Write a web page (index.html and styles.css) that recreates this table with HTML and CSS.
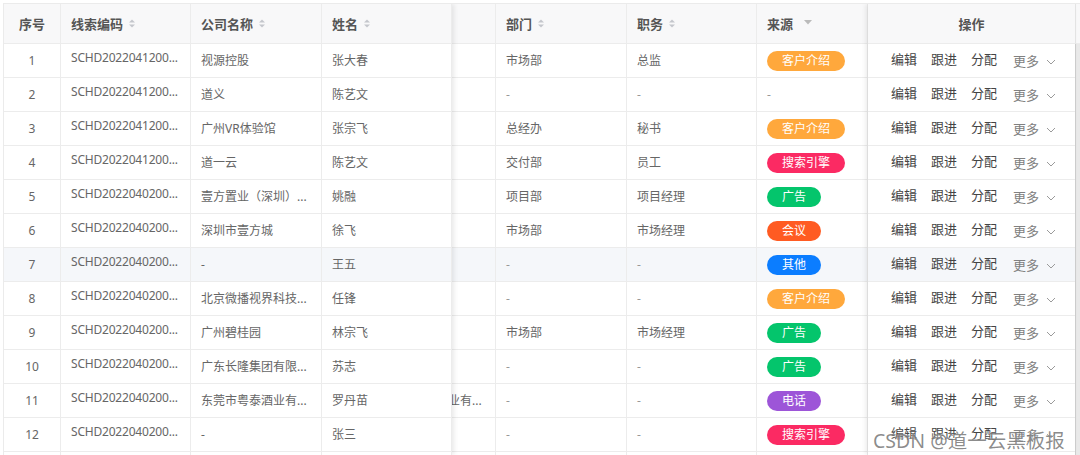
FILE: index.html
```html
<!DOCTYPE html>
<html lang="zh-CN">
<head>
<meta charset="utf-8">
<title>线索列表</title>
<link rel="stylesheet" href="styles.css">
</head>
<body>
<div class="page">
  <div class="table">
    <!-- fixed left columns -->
    <div class="pane pane-left">
      <div class="row head">
        <div class="cell c-idx center">序号</div>
        <div class="cell c-code">线索编码<svg class="sort" width="6" height="9" viewBox="0 0 6 9"><polygon points="0,3.5 3,0.5 6,3.5"/><polygon points="0,5.5 3,8.5 6,5.5"/></svg></div>
        <div class="cell c-company">公司名称<svg class="sort" width="6" height="9" viewBox="0 0 6 9"><polygon points="0,3.5 3,0.5 6,3.5"/><polygon points="0,5.5 3,8.5 6,5.5"/></svg></div>
        <div class="cell c-name">姓名<svg class="sort" width="6" height="9" viewBox="0 0 6 9"><polygon points="0,3.5 3,0.5 6,3.5"/><polygon points="0,5.5 3,8.5 6,5.5"/></svg></div>
      </div>
      <div class="row"><div class="cell c-idx center">1</div><div class="cell c-code"><span class="code">SCHD2022041200...</span></div><div class="cell c-company">视源控股</div><div class="cell c-name">张大春</div></div>
      <div class="row"><div class="cell c-idx center">2</div><div class="cell c-code"><span class="code">SCHD2022041200...</span></div><div class="cell c-company">道义</div><div class="cell c-name">陈艺文</div></div>
      <div class="row"><div class="cell c-idx center">3</div><div class="cell c-code"><span class="code">SCHD2022041200...</span></div><div class="cell c-company">广州VR体验馆</div><div class="cell c-name">张宗飞</div></div>
      <div class="row"><div class="cell c-idx center">4</div><div class="cell c-code"><span class="code">SCHD2022041200...</span></div><div class="cell c-company">道一云</div><div class="cell c-name">陈艺文</div></div>
      <div class="row"><div class="cell c-idx center">5</div><div class="cell c-code"><span class="code">SCHD2022040200...</span></div><div class="cell c-company">壹方置业（深圳）...</div><div class="cell c-name">姚融</div></div>
      <div class="row"><div class="cell c-idx center">6</div><div class="cell c-code"><span class="code">SCHD2022040200...</span></div><div class="cell c-company">深圳市壹方城</div><div class="cell c-name">徐飞</div></div>
      <div class="row hover"><div class="cell c-idx center">7</div><div class="cell c-code"><span class="code">SCHD2022040200...</span></div><div class="cell c-company">-</div><div class="cell c-name">王五</div></div>
      <div class="row"><div class="cell c-idx center">8</div><div class="cell c-code"><span class="code">SCHD2022040200...</span></div><div class="cell c-company">北京微播视界科技...</div><div class="cell c-name">任锋</div></div>
      <div class="row"><div class="cell c-idx center">9</div><div class="cell c-code"><span class="code">SCHD2022040200...</span></div><div class="cell c-company">广州碧桂园</div><div class="cell c-name">林宗飞</div></div>
      <div class="row"><div class="cell c-idx center">10</div><div class="cell c-code"><span class="code">SCHD2022040200...</span></div><div class="cell c-company">广东长隆集团有限...</div><div class="cell c-name">苏志</div></div>
      <div class="row"><div class="cell c-idx center">11</div><div class="cell c-code"><span class="code">SCHD2022040200...</span></div><div class="cell c-company">东莞市粤泰酒业有...</div><div class="cell c-name">罗丹苗</div></div>
      <div class="row"><div class="cell c-idx center">12</div><div class="cell c-code"><span class="code">SCHD2022040200...</span></div><div class="cell c-company">-</div><div class="cell c-name">张三</div></div>
      <div class="row"><div class="cell c-idx"></div><div class="cell c-code"></div><div class="cell c-company"></div><div class="cell c-name"></div></div>
    </div>

    <!-- scrolling middle columns -->
    <div class="pane pane-mid">
      <div class="row head">
        <div class="cell c-hidden"></div>
        <div class="cell c-dept">部门<svg class="sort" width="6" height="9" viewBox="0 0 6 9"><polygon points="0,3.5 3,0.5 6,3.5"/><polygon points="0,5.5 3,8.5 6,5.5"/></svg></div>
        <div class="cell c-title">职务<svg class="sort" width="6" height="9" viewBox="0 0 6 9"><polygon points="0,3.5 3,0.5 6,3.5"/><polygon points="0,5.5 3,8.5 6,5.5"/></svg></div>
        <div class="cell c-source">来源<svg class="filter" width="8" height="5" viewBox="0 0 8 5"><polygon points="0,0 8,0 4,4.5"/></svg></div>
      </div>
      <div class="row"><div class="cell c-hidden"></div><div class="cell c-dept">市场部</div><div class="cell c-title">总监</div><div class="cell c-source"><span class="tag tag-referral">客户介绍</span></div></div>
      <div class="row"><div class="cell c-hidden"></div><div class="cell c-dept dash">-</div><div class="cell c-title dash">-</div><div class="cell c-source dash">-</div></div>
      <div class="row"><div class="cell c-hidden"></div><div class="cell c-dept">总经办</div><div class="cell c-title">秘书</div><div class="cell c-source"><span class="tag tag-referral">客户介绍</span></div></div>
      <div class="row"><div class="cell c-hidden"></div><div class="cell c-dept">交付部</div><div class="cell c-title">员工</div><div class="cell c-source"><span class="tag tag-search">搜索引擎</span></div></div>
      <div class="row"><div class="cell c-hidden"></div><div class="cell c-dept">项目部</div><div class="cell c-title">项目经理</div><div class="cell c-source"><span class="tag tag-ad">广告</span></div></div>
      <div class="row"><div class="cell c-hidden"></div><div class="cell c-dept">市场部</div><div class="cell c-title">市场经理</div><div class="cell c-source"><span class="tag tag-meeting">会议</span></div></div>
      <div class="row hover"><div class="cell c-hidden"></div><div class="cell c-dept dash">-</div><div class="cell c-title dash">-</div><div class="cell c-source"><span class="tag tag-other">其他</span></div></div>
      <div class="row"><div class="cell c-hidden"></div><div class="cell c-dept dash">-</div><div class="cell c-title dash">-</div><div class="cell c-source"><span class="tag tag-referral">客户介绍</span></div></div>
      <div class="row"><div class="cell c-hidden"></div><div class="cell c-dept">市场部</div><div class="cell c-title">市场经理</div><div class="cell c-source"><span class="tag tag-ad">广告</span></div></div>
      <div class="row"><div class="cell c-hidden"></div><div class="cell c-dept dash">-</div><div class="cell c-title dash">-</div><div class="cell c-source"><span class="tag tag-ad">广告</span></div></div>
      <div class="row"><div class="cell c-hidden"><span class="shifted">东莞市粤泰酒业有...</span></div><div class="cell c-dept dash">-</div><div class="cell c-title dash">-</div><div class="cell c-source"><span class="tag tag-phone">电话</span></div></div>
      <div class="row"><div class="cell c-hidden"></div><div class="cell c-dept dash">-</div><div class="cell c-title dash">-</div><div class="cell c-source"><span class="tag tag-search">搜索引擎</span></div></div>
      <div class="row"><div class="cell c-hidden"></div><div class="cell c-dept"></div><div class="cell c-title"></div><div class="cell c-source"></div></div>
    </div>

    <!-- fixed right column -->
    <div class="pane pane-right">
      <div class="row head"><div class="cell c-ops center">操作</div></div>
      <div class="row"><div class="cell c-ops"><div class="ops"><span>编辑</span><span>跟进</span><span>分配</span><span class="more">更多<svg width="10" height="6" viewBox="0 0 10 6"><polyline points="1,1 5,5 9,1"/></svg></span></div></div></div>
      <div class="row"><div class="cell c-ops"><div class="ops"><span>编辑</span><span>跟进</span><span>分配</span><span class="more">更多<svg width="10" height="6" viewBox="0 0 10 6"><polyline points="1,1 5,5 9,1"/></svg></span></div></div></div>
      <div class="row"><div class="cell c-ops"><div class="ops"><span>编辑</span><span>跟进</span><span>分配</span><span class="more">更多<svg width="10" height="6" viewBox="0 0 10 6"><polyline points="1,1 5,5 9,1"/></svg></span></div></div></div>
      <div class="row"><div class="cell c-ops"><div class="ops"><span>编辑</span><span>跟进</span><span>分配</span><span class="more">更多<svg width="10" height="6" viewBox="0 0 10 6"><polyline points="1,1 5,5 9,1"/></svg></span></div></div></div>
      <div class="row"><div class="cell c-ops"><div class="ops"><span>编辑</span><span>跟进</span><span>分配</span><span class="more">更多<svg width="10" height="6" viewBox="0 0 10 6"><polyline points="1,1 5,5 9,1"/></svg></span></div></div></div>
      <div class="row"><div class="cell c-ops"><div class="ops"><span>编辑</span><span>跟进</span><span>分配</span><span class="more">更多<svg width="10" height="6" viewBox="0 0 10 6"><polyline points="1,1 5,5 9,1"/></svg></span></div></div></div>
      <div class="row hover"><div class="cell c-ops"><div class="ops"><span>编辑</span><span>跟进</span><span>分配</span><span class="more">更多<svg width="10" height="6" viewBox="0 0 10 6"><polyline points="1,1 5,5 9,1"/></svg></span></div></div></div>
      <div class="row"><div class="cell c-ops"><div class="ops"><span>编辑</span><span>跟进</span><span>分配</span><span class="more">更多<svg width="10" height="6" viewBox="0 0 10 6"><polyline points="1,1 5,5 9,1"/></svg></span></div></div></div>
      <div class="row"><div class="cell c-ops"><div class="ops"><span>编辑</span><span>跟进</span><span>分配</span><span class="more">更多<svg width="10" height="6" viewBox="0 0 10 6"><polyline points="1,1 5,5 9,1"/></svg></span></div></div></div>
      <div class="row"><div class="cell c-ops"><div class="ops"><span>编辑</span><span>跟进</span><span>分配</span><span class="more">更多<svg width="10" height="6" viewBox="0 0 10 6"><polyline points="1,1 5,5 9,1"/></svg></span></div></div></div>
      <div class="row"><div class="cell c-ops"><div class="ops"><span>编辑</span><span>跟进</span><span>分配</span><span class="more">更多<svg width="10" height="6" viewBox="0 0 10 6"><polyline points="1,1 5,5 9,1"/></svg></span></div></div></div>
      <div class="row"><div class="cell c-ops"><div class="ops"><span>编辑</span><span>跟进</span><span>分配</span><span class="more">更多<svg width="10" height="6" viewBox="0 0 10 6"><polyline points="1,1 5,5 9,1"/></svg></span></div></div></div>
      <div class="row"><div class="cell c-ops"></div></div>
    </div>

    <div class="scrollbar"><div class="sb-head"></div><div class="sb-track"></div></div>
  </div>
  <div class="watermark">CSDN @道一云黑板报</div>
</div>
</body>
</html>
```

FILE: styles.css
```css
* { box-sizing: border-box; }

html, body {
  margin: 0;
  padding: 0;
  background: #fff;
}

body {
  font-family: "Noto Sans", "Noto Sans CJK SC", sans-serif;
  font-size: 12px;
  color: #666;
}

.page {
  position: relative;
  width: 1080px;
  height: 455px;
  padding: 3px 0 0 3px;
  overflow: hidden;
}

.table {
  display: flex;
  height: 452px;
  border-top: 1px solid #ebebeb;
  border-left: 1px solid #ebebeb;
  overflow: hidden;
}

.pane {
  display: flex;
  flex-direction: column;
  flex: none;
  background: #fff;
}

.pane-left {
  position: relative;
  z-index: 2;
  box-shadow: 2px 0 5px rgba(0, 0, 0, 0.09);
}

.pane-mid {
  position: relative;
  z-index: 1;
}

.pane-right {
  position: relative;
  z-index: 2;
  box-shadow: -2px 0 5px rgba(0, 0, 0, 0.09);
}

.row {
  display: flex;
  flex: none;
  height: 34px;
  border-bottom: 1px solid #ececec;
  background: #fff;
}

.row.head {
  height: 40px;
  background: #f8f8f9;
  color: #555;
  font-weight: 700;
  font-size: 13px;
}

.row.hover {
  background: #f5f7fa;
}

.cell {
  display: flex;
  align-items: center;
  flex: none;
  padding: 0 10px;
  border-right: 1px solid #ececec;
  white-space: nowrap;
  overflow: hidden;
  line-height: 20px;
}

.cell.center {
  justify-content: center;
  padding: 0;
}

.c-idx { width: 57px; }
.c-code { width: 130px; }
.c-company { width: 131px; }
.c-name { width: 130px; }
.c-hidden { width: 44px; padding: 0; }
.c-dept { width: 131px; }
.c-title { width: 130px; }
.c-source { width: 111px; }
.c-ops { width: 207px; border-right: none; justify-content: center; padding: 0 0 0 4px; }

.row:not(.head) .c-code { padding-bottom: 6px; }

.code {
  letter-spacing: -0.2px;
}

.shifted {
  flex: none;
  display: block;
  width: 130px;
  margin-left: -86px;
  padding: 0 10px;
  overflow: hidden;
  white-space: nowrap;
}

.dash { color: #999; }

.sort {
  margin-left: 6px;
  fill: #c4c6cc;
  flex: none;
}

.filter {
  margin-left: 11px;
  margin-top: -2px;
  fill: #bbbbbb;
  flex: none;
}

.tag {
  display: inline-block;
  height: 20px;
  line-height: 20px;
  padding: 0 15px;
  border-radius: 10px;
  color: #fff;
  font-size: 12px;
}

.tag-referral { background: #ffa83c; }
.tag-search { background: #fb2a63; }
.tag-ad { background: #04c56c; }
.tag-meeting { background: #ff5b22; }
.tag-other { background: #0b7dff; }
.tag-phone { background: #9d55d8; }

.ops {
  display: flex;
  align-items: center;
  gap: 14px;
  font-size: 13px;
  color: #444;
  margin-top: -3px;
}

.more {
  display: flex;
  align-items: center;
  gap: 7px;
  color: #808080;
  padding-top: 4px;
  margin-left: 2px;
}

.more svg {
  fill: none;
  stroke: #9a9a9a;
  stroke-width: 1;
  margin-top: 1px;
}

.scrollbar {
  display: flex;
  flex-direction: column;
  width: 5px;
  flex: none;
}

.sb-head {
  height: 40px;
  background: #f8f8f9;
  border-left: 1px solid #e6e6e6;
  border-bottom: 1px solid #ececec;
}

.sb-track {
  flex: 1;
  background: #e9e9e9;
  border-left: 1px solid #cfcfcf;
}

.watermark {
  position: absolute;
  z-index: 5;
  left: 873px;
  top: 425px;
  font-size: 19.5px;
  letter-spacing: 0;
  color: rgba(95, 95, 95, 0.72);
  text-shadow: 0 0 2px rgba(255, 255, 255, 0.9);
  white-space: nowrap;
  font-weight: 400;
}
```
